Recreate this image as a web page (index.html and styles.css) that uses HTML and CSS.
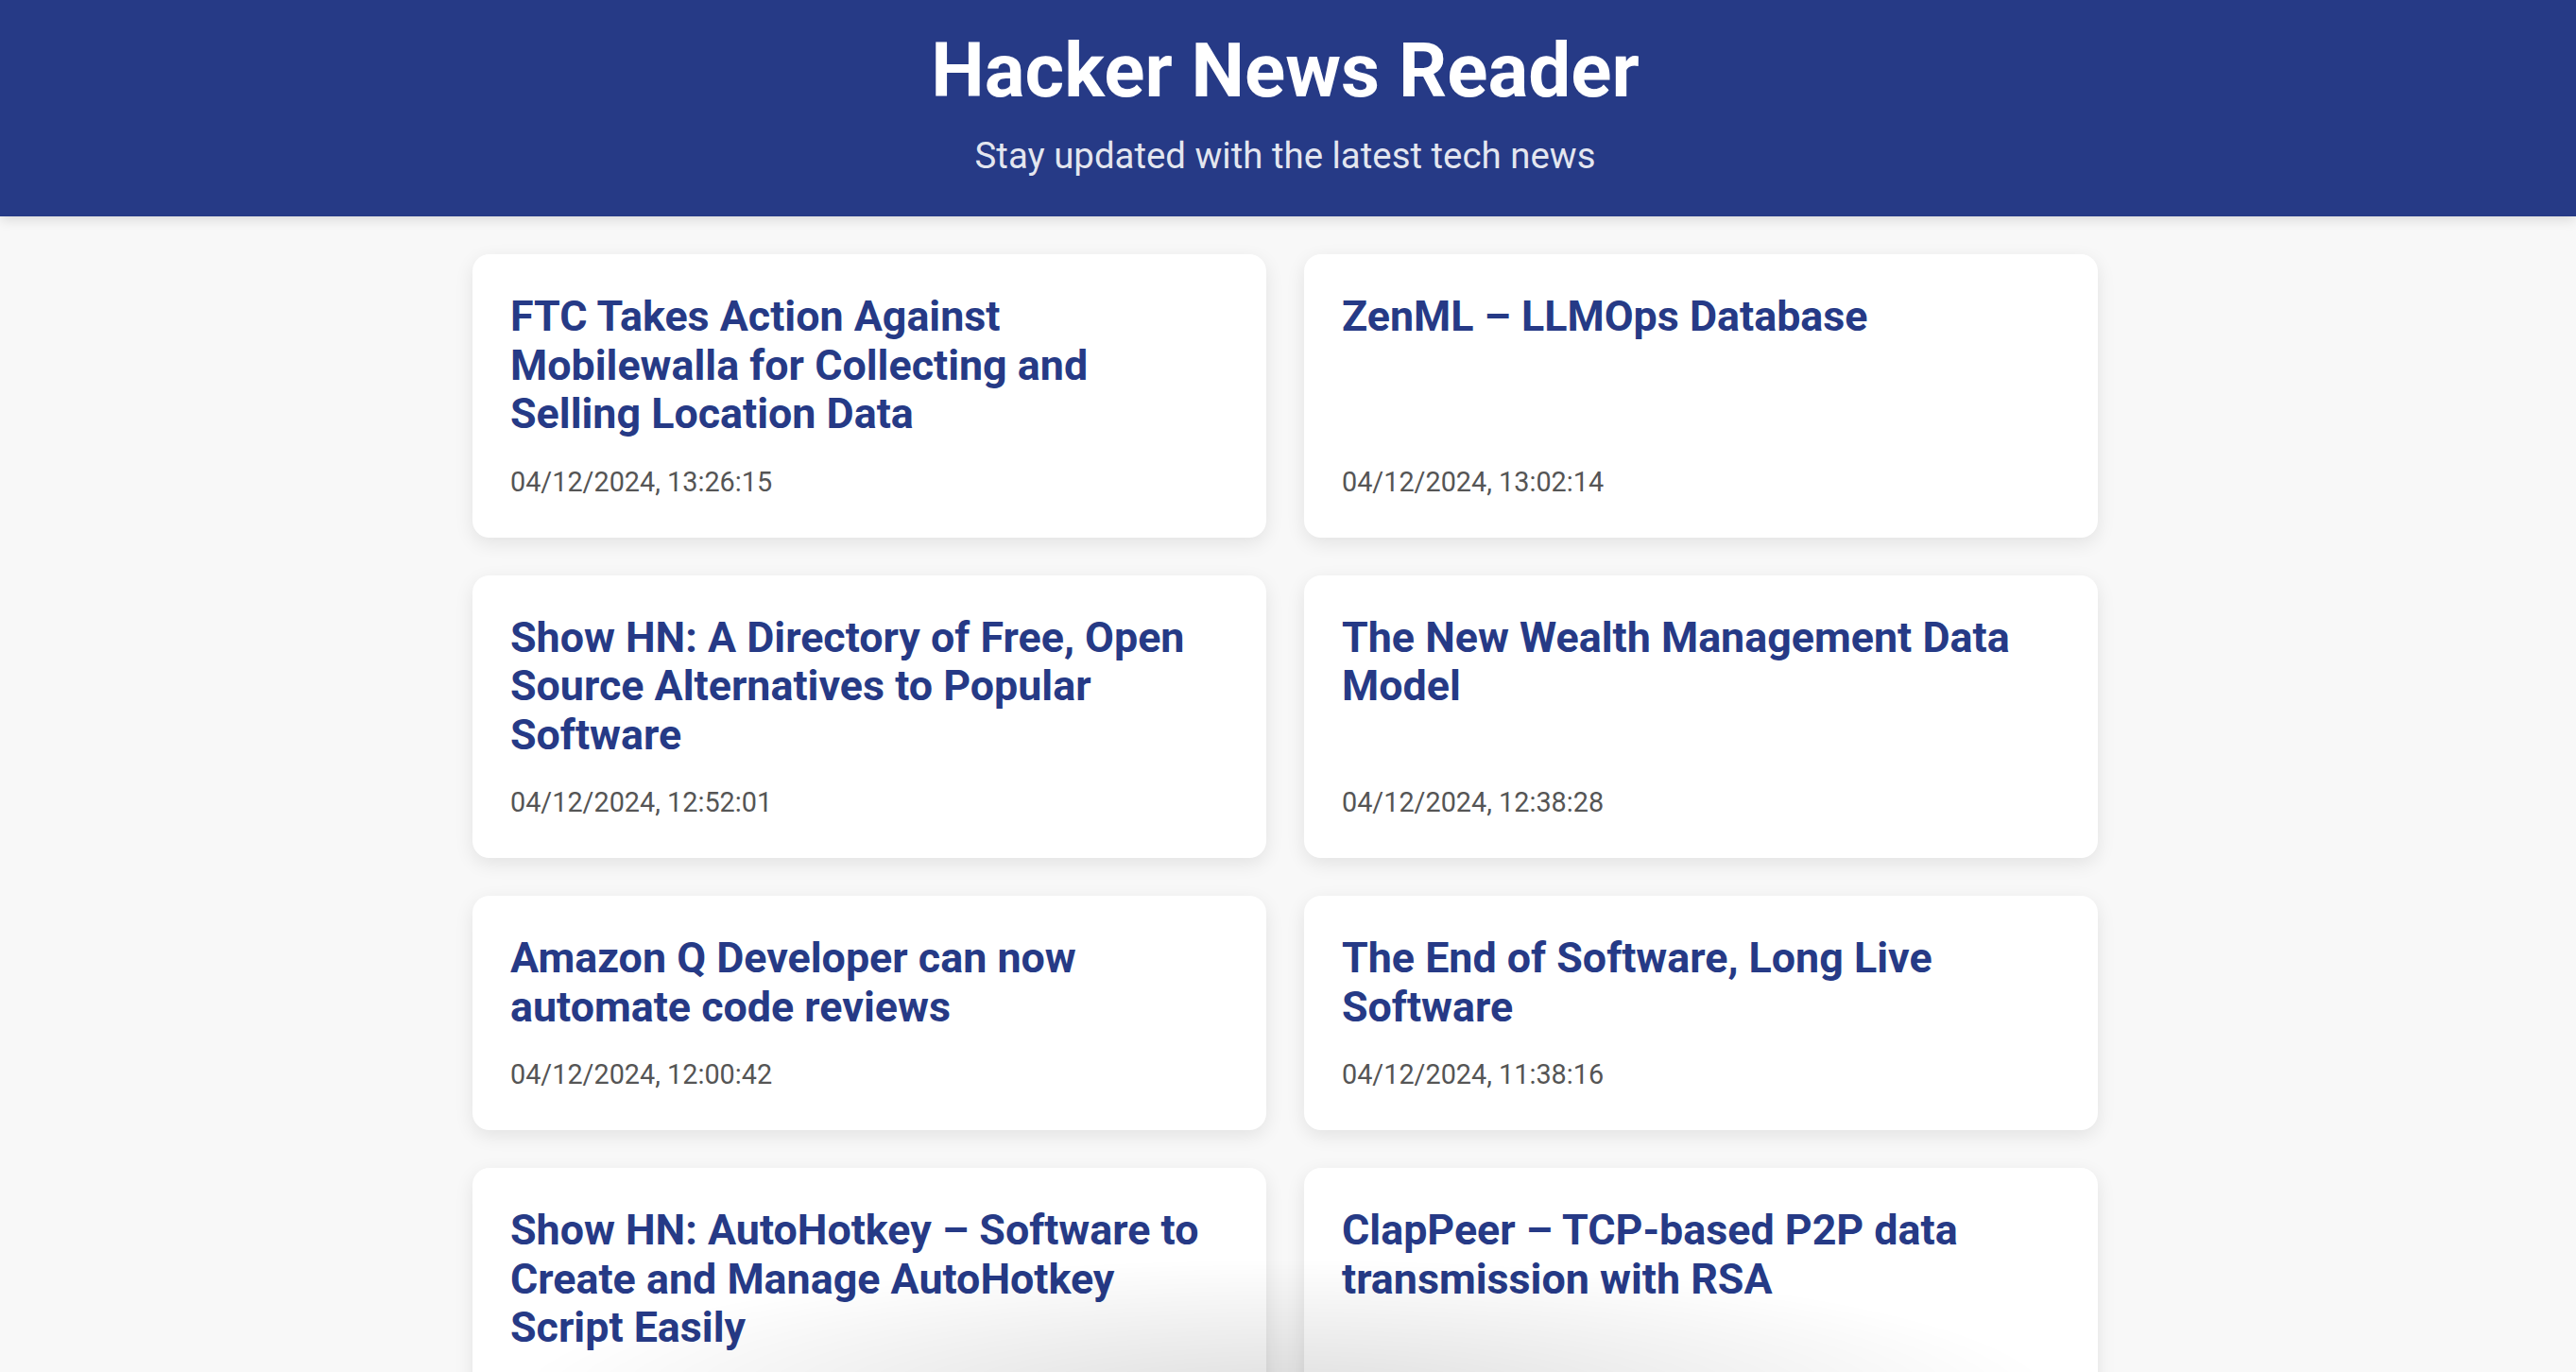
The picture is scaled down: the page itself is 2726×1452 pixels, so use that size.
FILE: index.html
```html
<!DOCTYPE html>
<html lang="en">
<head>
<meta charset="utf-8">
<title>Hacker News Reader</title>
<link rel="stylesheet" href="styles.css">
</head>
<body>
<header class="site-header">
  <h1 class="site-title">Hacker News Reader</h1>
  <p class="site-subtitle">Stay updated with the latest tech news</p>
</header>
<main class="content">
  <div class="grid">
    <article class="card">
      <h2 class="card-title">FTC Takes Action Against Mobilewalla for Collecting and Selling Location Data</h2>
      <p class="card-date">04/12/2024, 13:26:15</p>
    </article>
    <article class="card">
      <h2 class="card-title">ZenML – LLMOps Database</h2>
      <p class="card-date">04/12/2024, 13:02:14</p>
    </article>
    <article class="card">
      <h2 class="card-title">Show HN: A Directory of Free, Open Source Alternatives to Popular Software</h2>
      <p class="card-date">04/12/2024, 12:52:01</p>
    </article>
    <article class="card">
      <h2 class="card-title">The New Wealth Management Data Model</h2>
      <p class="card-date">04/12/2024, 12:38:28</p>
    </article>
    <article class="card">
      <h2 class="card-title">Amazon Q Developer can now automate code reviews</h2>
      <p class="card-date">04/12/2024, 12:00:42</p>
    </article>
    <article class="card">
      <h2 class="card-title">The End of Software, Long Live Software</h2>
      <p class="card-date">04/12/2024, 11:38:16</p>
    </article>
    <article class="card">
      <h2 class="card-title">Show HN: AutoHotkey – Software to Create and Manage AutoHotkey Script Easily</h2>
      <p class="card-date">04/12/2024, 11:21:09</p>
    </article>
    <article class="card">
      <h2 class="card-title">ClapPeer – TCP-based P2P data transmission with RSA</h2>
      <p class="card-date">04/12/2024, 11:05:33</p>
    </article>
  </div>
</main>
<div class="bottom-shade"></div>
</body>
</html>
```

FILE: styles.css
```css
* {
  box-sizing: border-box;
}

html, body {
  margin: 0;
  padding: 0;
}

body {
  background: #f8f8f8;
  font-family: Roboto, "Noto Sans", "Liberation Sans", sans-serif;
  color: #333;
}

.site-header {
  background: #263a86;
  color: #fff;
  text-align: center;
  padding: 28px 26px 42px 20px;
  box-shadow: 0 4px 12px rgba(0, 0, 0, 0.12);
  position: relative;
  z-index: 1;
}

.site-title {
  margin: 0;
  font-size: 80px;
  font-weight: 700;
  line-height: normal;
}

.site-subtitle {
  margin: 20px 0 0;
  font-size: 38.4px;
  line-height: normal;
  color: rgba(255, 255, 255, 0.88);
}

.content {
  padding: 40px 6px 80px 0;
}

.grid {
  width: 1720px;
  margin: 0 auto;
  display: grid;
  grid-template-columns: 1fr 1fr;
  gap: 40px;
}

.card {
  background: #fff;
  border-radius: 18px;
  padding: 40px 40px 42px;
  display: flex;
  flex-direction: column;
  box-shadow: 0 6px 20px rgba(0, 0, 0, 0.09);
}

.card-title {
  margin: 0 0 29px;
  font-size: 44.8px;
  line-height: 1.15;
  font-weight: 700;
  color: #263a86;
}

.card-date {
  margin: auto 0 0;
  font-size: 28.8px;
  line-height: normal;
  color: #555;
}

.bottom-shade {
  position: fixed;
  left: 0;
  right: 0;
  bottom: 0;
  height: 160px;
  pointer-events: none;
  background: radial-gradient(ellipse 820px 150px at 1360px 190px, rgba(0, 0, 0, 0.13), rgba(0, 0, 0, 0) 100%);
}
```
